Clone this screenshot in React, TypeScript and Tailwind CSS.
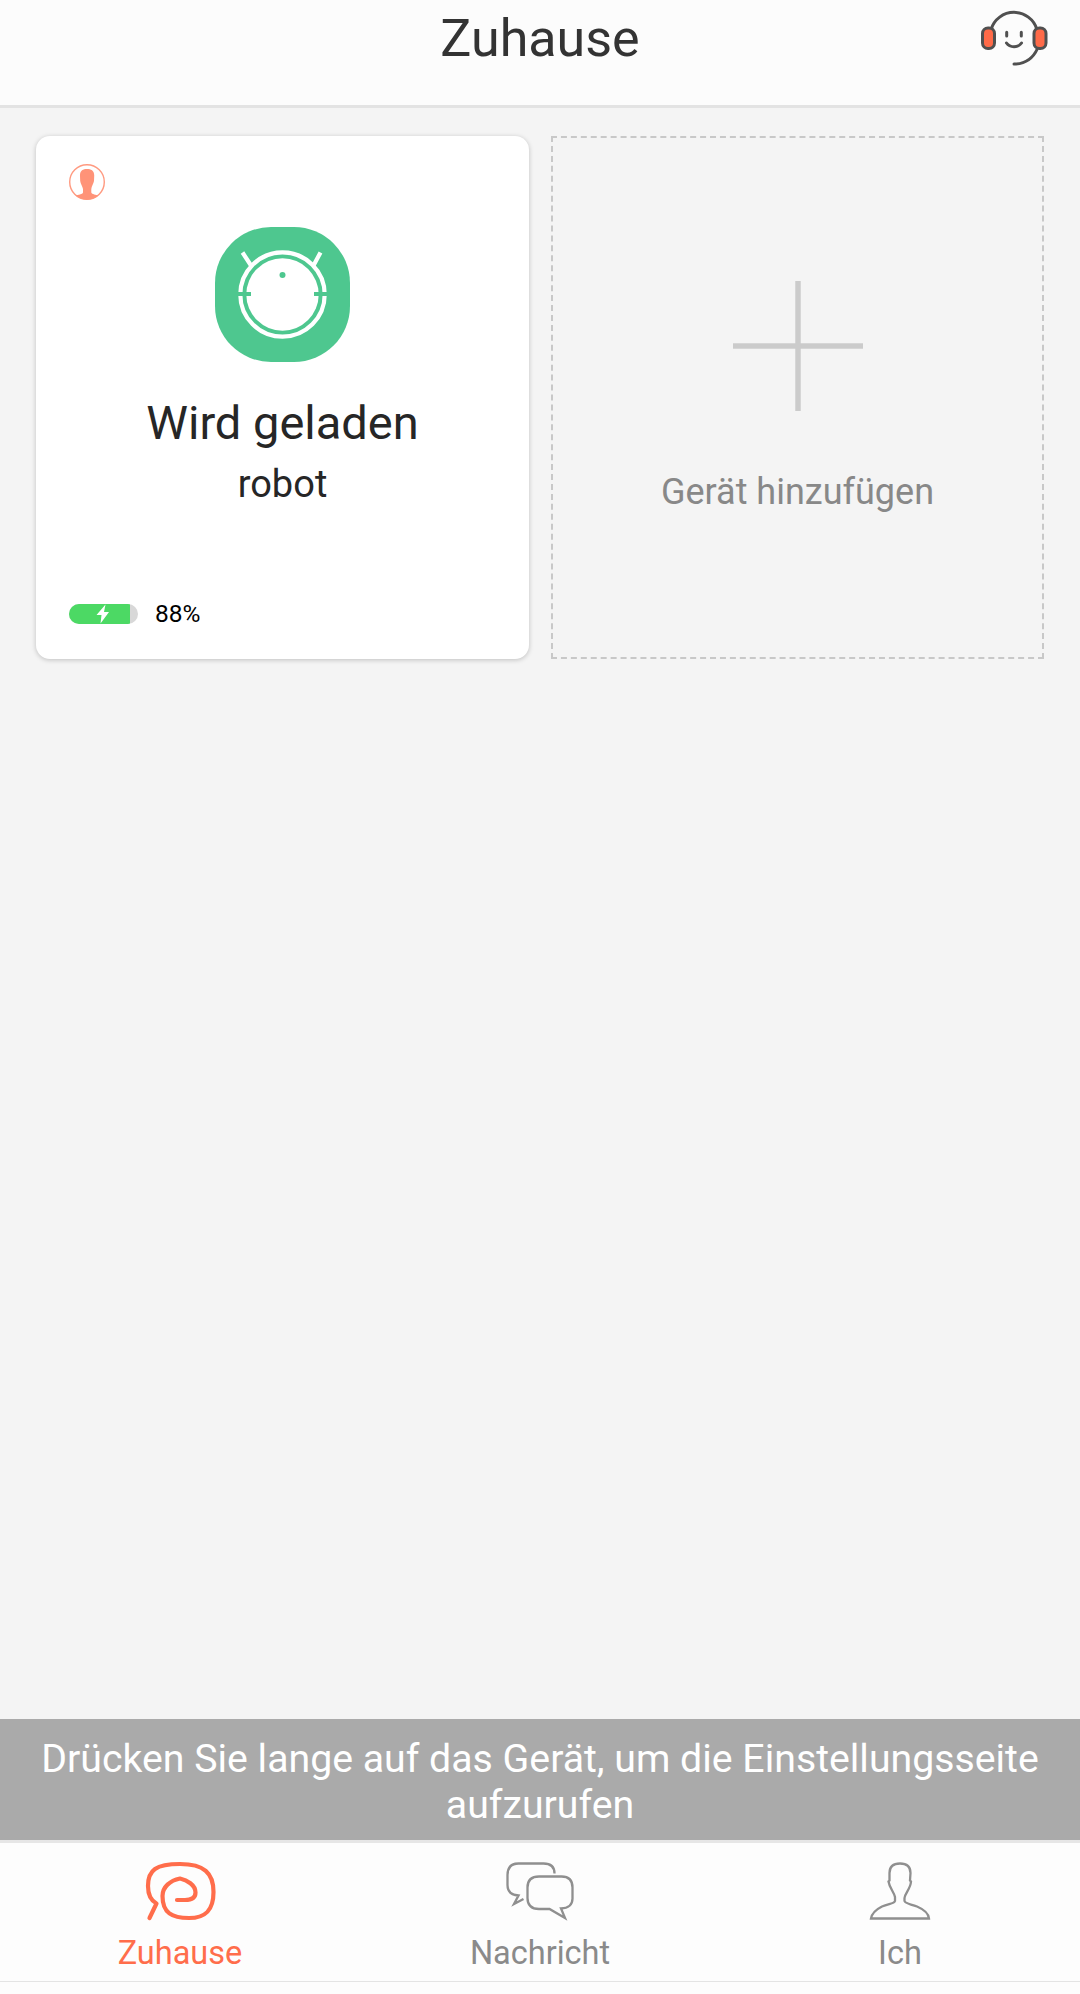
import type { ReactNode } from "react";

function SupportIcon() {
  return (
    <svg width="68" height="58" viewBox="0 0 68 58" fill="none" stroke="#505050" strokeWidth="3" strokeLinecap="round">
      <path d="M11 19.5 A24 24 0 0 1 57 19.5" />
      <path d="M57.5 38.5 C53 48.5 45 54 34 54" />
      <rect x="2.5" y="18" width="12" height="20.5" rx="5.5" fill="#ff6a48" />
      <rect x="54" y="18" width="12" height="20.5" rx="5.5" fill="#ff6a48" />
      <path d="M26.7 22.3v3.800M41.3 22.3v3.800" />
      <path d="M26.5 33 C30 38 38 38 41.5 33" />
    </svg>
  );
}

function OwnerBadge() {
  return (
    <svg width="36" height="36" viewBox="0 0 36 36">
      <circle cx="18" cy="18" r="17.3" fill="#fff" stroke="#ff9a80" strokeWidth="1.4" />
      <path
        d="M18 5 C22 5 25.5 6.5 25.2 12 L25 17 C24.5 20 22.5 22 22.3 25 V28.5 C23 30.5 27 30.5 29.5 31.5 C23 37 13 37 6.5 31.5 C9 30.5 13.5 30.5 14 28.5 V25 C13.5 22 11.5 20 11.2 17 L11 12 C10.7 6.5 14 5 18 5Z"
        fill="#ff9378"
      />
    </svg>
  );
}

function RobotIcon() {
  return (
    <svg width="135" height="135" viewBox="0 0 135 135">
      <rect width="135" height="135" rx="56" fill="#4ec78f" />
      <path d="M27.5 25.5 L36 38.5 M105.5 25.5 L98.5 38.5" stroke="#fff" strokeWidth="4.2" />
      <circle cx="67.5" cy="67.5" r="42.2" fill="none" stroke="#fff" strokeWidth="4.2" />
      <circle cx="67.5" cy="67.5" r="36.2" fill="#fff" />
      <path d="M22 67 H36 M99 67 H113" stroke="#4ec78f" strokeWidth="4" />
      <circle cx="67.5" cy="48" r="3" fill="#4ec78f" />
    </svg>
  );
}

function Battery({ level }: { level: number }) {
  return (
    <div className="relative h-[20px] w-[69px] overflow-hidden rounded-full bg-[#d8d8d8]">
      <div className="h-full bg-[#4cd964]" style={{ width: `${level}%` }} />
      <svg className="absolute top-0 left-[27px]" width="14" height="20" viewBox="0 0 14 20" fill="#fff">
        <path d="M9.5 0.5 L0.5 11 H5.5 L4.5 19.5 L13 8 H8Z" />
      </svg>
    </div>
  );
}

function HomeIcon() {
  return (
    <svg width="72" height="62" viewBox="0 0 72 62" fill="none" stroke="#ff6d4b" strokeWidth="4.2" strokeLinecap="round" strokeLinejoin="round">
      <path d="M5.5 57 L12.5 42.5 C6 39 4 33 4 25 C4 9 12 3 36 3 C60 3 69.5 12 69.5 31 C69.5 50 61 57 45 57 C28 57 18.5 52 18.5 35 C18.5 26 26 19.5 36 17.5 C43 19 51.5 24 51.5 31.5 C51.5 37.5 46 39 41 39 H33" />
    </svg>
  );
}

function MessageIcon() {
  return (
    <svg width="70" height="60" viewBox="0 0 70 60" fill="none" stroke="#8f8f8f" strokeWidth="2.3">
      <path d="M49.5 12.5 C49.5 5 45 2.5 38.5 2.5 H13.5 C6 2.5 2.5 7 2.5 14 V24 C2.5 30.5 6 34 13.5 34.5 L9 43 L18.5 38" />
      <path d="M34 15.5 H56.5 C64 15.5 67.5 19.5 67.5 26.5 V37.5 C67.5 43.5 63.5 47.5 56 47.5 L60 57 L44.5 48 H34 C26 48 22.5 44 22.5 37 V26.5 C22.5 19.5 26.5 15.5 34 15.5Z" />
    </svg>
  );
}

function PersonIcon() {
  return (
    <svg width="62" height="60" viewBox="0 0 62 60" fill="none" stroke="#8f8f8f" strokeWidth="2.3">
      <path d="M31 2.5 C38 2.5 41.5 5.5 41.5 12 L41 19.500 L42 20.500 C41.500 28 36 32 35.500 37 V40 C36.500 43 42 43 48 45.500 C55 48.500 59.500 52 60 57.500 H2 C3 52 7 48.500 13 45.500 C20 42.500 25 43 26 40 V36 C25 31 20.500 27 19.500 20.500 L20.500 19.500 V12 C20.500 5.500 24 2.500 31 2.500Z" />
    </svg>
  );
}

type TabProps = { label: string; icon: ReactNode; active?: boolean };

function Tab({ label, icon, active }: TabProps) {
  return (
    <a
      href="#"
      className={`flex flex-1 flex-col items-center pt-[18px] text-[32.5px] leading-[38px] ${active ? "text-[#ff6d4b]" : "text-[#8a8a8a]"}`}
    >
      <span className="flex h-[73px] items-start justify-center">{icon}</span>
      <span>{label}</span>
    </a>
  );
}

export default function App() {
  return (
    <div className="flex h-[1994px] w-[1080px] flex-col bg-[#f4f4f4] font-[Roboto,sans-serif]">
      <header className="grid h-[108px] shrink-0 grid-cols-[1fr_auto_1fr] items-start border-b-[3px] border-[#e3e3e3] bg-[#fcfcfc]">
        <h1 className="col-start-2 mt-[8px] text-[52px] leading-[61px] text-[#333333]">Zuhause</h1>
        <button className="mt-[10px] mr-[32px] justify-self-end" aria-label="Support">
          <SupportIcon />
        </button>
      </header>

      <main className="flex flex-1 items-start gap-[22px] px-[36px] pt-[28px]">
        <section className="flex h-[523px] w-[493px] flex-col rounded-[14px] bg-white px-[33px] pt-[28px] shadow-[0_1px_5px_rgba(0,0,0,0.22)]">
          <OwnerBadge />
          <div className="mt-[27px] flex flex-col items-center text-[#262626]">
            <RobotIcon />
            <h2 className="mt-[33px] text-[47px] leading-[56px]">Wird geladen</h2>
            <p className="mt-[11px] text-[38px] leading-[44px]">robot</p>
          </div>
          <div className="mt-[94px] flex items-center gap-[17px]">
            <Battery level={89} />
            <span className="text-[24.5px] leading-[28px] text-black">88%</span>
          </div>
        </section>

        <button className="flex h-[523px] w-[493px] flex-col items-center border-2 border-dashed border-[#c8c8c8] pt-[143px]">
          <svg width="130" height="130" viewBox="0 0 130 130" stroke="#cbcbcb" strokeWidth="5.5">
            <path d="M65 0V130M0 65H130" />
          </svg>
          <span className="mt-[60px] text-[36px] leading-[42px] text-[#888888]">Gerät hinzufügen</span>
        </button>
      </main>

      <p className="h-[121px] shrink-0 bg-[#aaaaaa] px-[30px] pt-[17px] text-center text-[39.25px] leading-[46px] text-white">
        Drücken Sie lange auf das Gerät, um die Einstellungsseite aufzurufen
      </p>

      <nav className="flex h-[142px] shrink-0 border-t-[3px] border-b border-t-[#e6e6e6] border-b-[#e4e4e4] bg-[#fdfdfd]">
        <Tab label="Zuhause" icon={<HomeIcon />} active />
        <Tab label="Nachricht" icon={<MessageIcon />} />
        <Tab label="Ich" icon={<PersonIcon />} />
      </nav>
      <div className="h-[12px] shrink-0 bg-[#fdfdfd]" />
    </div>
  );
}
